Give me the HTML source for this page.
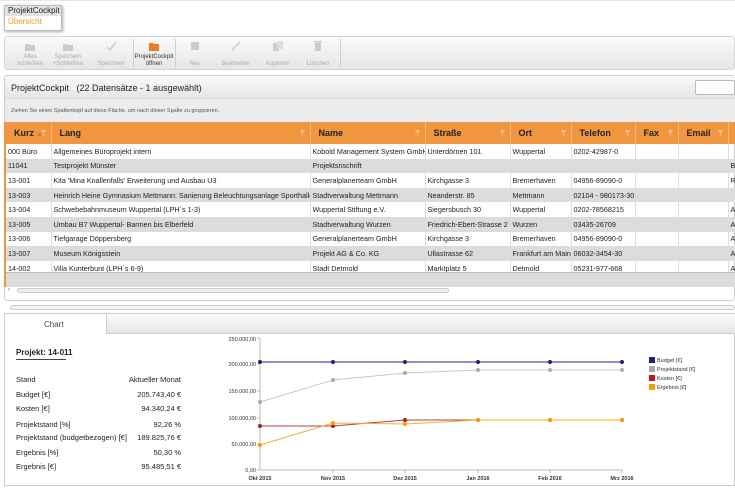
<!DOCTYPE html>
<html><head><meta charset="utf-8"><style>
*{box-sizing:border-box;margin:0;padding:0}
body{width:735px;height:491px;background:#fff;font-family:"Liberation Sans",sans-serif;font-size:8px;color:#222;position:relative;overflow:hidden}
.a{position:absolute}
.grad{background:linear-gradient(#fafafa,#e6e6e6)}
.btn{position:absolute;top:40px;width:40px;text-align:center;color:#aaa;font-size:6px;line-height:7px}
.btn svg{display:block;margin:0 auto 2px}
.sep{position:absolute;top:39px;width:1px;height:28px;background:#d0d0d0}
.wrap{position:absolute;left:6px;top:122px;width:729px;height:150px;overflow:hidden}
table{border-collapse:collapse;table-layout:fixed;width:742px}
td,th{white-space:nowrap;overflow:hidden;font-size:7.2px;padding:0 2px;border-right:1px solid #ddd}
th{background:#f0963f;height:22px;text-align:left;font-weight:bold;font-size:9px;color:#222;border-right:1px solid #f7b77a;padding-left:8px;position:relative}
th i{position:absolute;right:4px;top:8px;width:6px;height:6px;background:#f6c08e;clip-path:polygon(0 0,100% 0,60% 50%,60% 100%,40% 100%,40% 50%)}
td{height:14.6px}
tr.g td{background:#dcdcdc}
.lbl{position:absolute;left:16px;font-size:7.5px}
.val{position:absolute;right:554px;font-size:7.5px}
</style></head><body>
<div class="a" style="left:4px;top:5px;width:58px;height:26px;border:1px solid #bbb;box-shadow:1px 1px 3px #aaa;background:#fff">
<div style="background:#e2e2e2;height:10px;font-size:8px;padding-left:3px;line-height:10px">ProjektCockpit</div>
<div style="color:#f0a020;font-size:8px;padding-left:3px;line-height:12px">Übersicht</div></div>
<div class="a" style="left:0;top:0;width:735px;height:1px;background:#e6e6e6"></div>
<div class="a grad" style="left:4px;top:36px;width:731px;height:34px;border:1px solid #d4d4d4;border-radius:3px"></div>
<div class="btn" style="left:10px"><svg width="12" height="12"><path d="M1 4h4l1 1h5v6H1z" fill="#ccc"/></svg>Alles<br>schließen</div>
<div class="btn" style="left:48px"><svg width="12" height="12"><path d="M1 4h4l1 1h5v6H1z" fill="#ccc"/></svg>Speichern<br>+Schließen</div>
<div class="btn" style="left:91px"><svg width="12" height="12"><path d="M2 7l3 3 6-8" stroke="#ccc" fill="none" stroke-width="1.5"/></svg><br>Speichern</div>
<div class="sep" style="left:133px"></div>
<div class="btn" style="left:133px;color:#333;width:42px"><svg width="12" height="12"><path d="M1 3h4l1 1h5v7H1z" fill="#f07a20"/></svg>ProjektCockpit<br>öffnen</div>
<div class="sep" style="left:175px"></div>
<div class="btn" style="left:175px"><svg width="12" height="12"><rect x="2" y="2" width="8" height="8" fill="#ccc"/></svg><br>Neu</div>
<div class="btn" style="left:216px"><svg width="12" height="12"><path d="M2 10l8-8" stroke="#ccc" stroke-width="1.5"/></svg><br>Bearbeiten</div>
<div class="btn" style="left:258px"><svg width="12" height="12"><rect x="1" y="3" width="6" height="8" fill="#ccc"/><rect x="5" y="1" width="6" height="8" fill="#ddd"/></svg><br>Kopieren</div>
<div class="btn" style="left:298px"><svg width="12" height="12"><rect x="3" y="3" width="6" height="8" fill="#ccc"/><rect x="2" y="1" width="8" height="1.5" fill="#ccc"/></svg><br>Löschen</div>
<div class="sep" style="left:340px"></div>
<div class="a" style="left:4px;top:75px;width:731px;height:226px;border:1px solid #ccc;border-radius:3px;background:#fff"></div>
<div class="a grad" style="left:5px;top:76px;width:730px;height:23px;border-bottom:1px solid #ddd"></div>
<div class="a" style="left:11px;top:83px;font-size:9px">ProjektCockpit &nbsp; (22 Datensätze - 1 ausgewählt)</div>
<div class="a" style="left:695px;top:80px;width:40px;height:15px;border:1px solid #bbb;border-radius:2px;background:#fff"></div>
<div class="a" style="left:5px;top:99px;width:730px;height:23px;background:#ececec"></div>
<div class="a" style="left:11px;top:108px;font-size:5.5px;color:#555">Ziehen Sie einen Spaltenkopf auf diese Fläche, um nach dieser Spalte zu gruppieren.</div>
<div class="a" style="left:4px;top:122px;width:2px;height:165px;background:#f0963f"></div>
<div class="wrap"><table>
<colgroup><col style="width:45px"><col style="width:259px"><col style="width:115px"><col style="width:85px"><col style="width:61px"><col style="width:64px"><col style="width:43px"><col style="width:50px"><col style="width:20px"></colgroup>
<tr><th>Kurz <span style="color:#c77a30;font-size:6px">▲</span><i></i></th><th>Lang<i></i></th><th>Name<i></i></th><th>Straße<i></i></th><th>Ort<i></i></th><th>Telefon<i></i></th><th>Fax<i></i></th><th>Email<i></i></th><th></th></tr>
<tr><td>000 Büro</td><td>Allgemeines Büroprojekt intern</td><td>Kobold Management System GmbH</td><td>Unterdörnen 101</td><td>Wuppertal</td><td>0202-42987-0</td><td></td><td></td><td></td></tr>
<tr class="g"><td>11041</td><td>Testprojekt Münster</td><td>Projektsnschrift</td><td></td><td></td><td></td><td></td><td></td><td>B</td></tr>
<tr><td>13-001</td><td>Kita 'Mina Knallenfalls' Erweiterung und Ausbau U3</td><td>Generalplanerteam GmbH</td><td>Kirchgasse 3</td><td>Bremerhaven</td><td>04956-89090-0</td><td></td><td></td><td>R</td></tr>
<tr class="g"><td>13-003</td><td>Heinrich Heine Gymnasium Mettmann: Sanierung Beleuchtungsanlage Sporthalle</td><td>Stadtverwaltung Mettmann</td><td>Neanderstr. 85</td><td>Mettmann</td><td>02104 - 980173-30</td><td></td><td></td><td></td></tr>
<tr><td>13-004</td><td>Schwebebahnmuseum Wuppertal (LPH´s 1-3)</td><td>Wuppertal Stiftung e.V.</td><td>Siegersbusch 30</td><td>Wuppertal</td><td>0202-78568215</td><td></td><td></td><td>A</td></tr>
<tr class="g"><td>13-005</td><td>Umbau B7 Wuppertal- Barmen bis Elberfeld</td><td>Stadtverwaltung Wurzen</td><td>Friedrich-Ebert-Strasse 2</td><td>Wurzen</td><td>03435-26709</td><td></td><td></td><td>A</td></tr>
<tr><td>13-006</td><td>Tiefgarage Döppersberg</td><td>Generalplanerteam GmbH</td><td>Kirchgasse 3</td><td>Bremerhaven</td><td>04956-89090-0</td><td></td><td></td><td>A</td></tr>
<tr class="g"><td>13-007</td><td>Museum Königsstein</td><td>Projekt AG &amp; Co. KG</td><td>Ullastrasse 62</td><td>Frankfurt am Main</td><td>06032-3454-30</td><td></td><td></td><td>A</td></tr>
<tr><td>14-002</td><td>Villa Kunterbunt (LPH´s 6-9)</td><td>Stadt Detmold</td><td>Marktplatz 5</td><td>Detmold</td><td>05231-977-668</td><td></td><td></td><td>A</td></tr>
</table></div>
<div class="a" style="left:6px;top:272px;width:729px;height:15px;background:#dcdcdc;border-top:1px solid #bbb"></div>
<div class="a" style="left:17px;top:288px;width:432px;height:5px;border:1px solid #ccc;border-radius:3px;background:#eee"></div>
<div class="a" style="left:8px;top:287px;font-size:6px;color:#666">‹</div>
<div class="a" style="left:10px;top:305px;width:725px;height:5px;border:1px solid #ccc;border-radius:3px;background:#f2f2f2"></div>
<div class="a" style="left:4px;top:313px;width:731px;height:173px;border:1px solid #ccc;background:#fff"></div>
<div class="a grad" style="left:106px;top:314px;width:629px;height:20px;border-bottom:1px solid #ccc"></div>
<div class="a" style="left:106px;top:314px;width:1px;height:20px;background:#ccc"></div>
<div class="a" style="left:44px;top:320px;font-size:8px;color:#444">Chart</div>
<div class="a" style="left:16px;top:348px;font-size:8px;font-weight:bold">Projekt: 14-011</div>
<div class="a" style="left:16px;top:359px;width:50px;height:1px;background:#444"></div>
<div class="lbl" style="top:375px">Stand</div><div class="val" style="top:375px">Aktueller Monat</div>
<div class="lbl" style="top:390px">Budget [€]</div><div class="val" style="top:390px">205.743,40 €</div>
<div class="lbl" style="top:404px">Kosten [€]</div><div class="val" style="top:404px">94.340,24 €</div>
<div class="lbl" style="top:420px">Projektstand [%]</div><div class="val" style="top:420px">92,26 %</div>
<div class="lbl" style="top:433px">Projektstand (budgetbezogen) [€]</div><div class="val" style="top:433px">189.825,76 €</div>
<div class="lbl" style="top:448px">Ergebnis [%]</div><div class="val" style="top:448px">50,30 %</div>
<div class="lbl" style="top:462px">Ergebnis [€]</div><div class="val" style="top:462px">95.485,51 €</div>
<svg class="a" style="left:0;top:0" width="735" height="491" font-family="Liberation Sans" font-size="5.5" fill="#333">
<g text-anchor="end"><text x="256" y="341">250.000,00</text><text x="256" y="366">200.000,00</text><text x="256" y="393">150.000,00</text><text x="256" y="420">100.000,00</text><text x="256" y="446">50.000,00</text><text x="256" y="472">0,00</text></g>
<path d="M260 338V470H622" stroke="#bbb" fill="none"/>
<g stroke="#bbb"><path d="M257 338h3M257 364h3M257 391h3M257 418h3M257 444h3M257 470h3M333 470v3M405 470v3M478 470v3M550 470v3M622 470v3"/></g>
<g text-anchor="middle" font-weight="bold"><text x="260" y="480">Okt 2015</text><text x="333" y="480">Nov 2015</text><text x="405" y="480">Dez 2015</text><text x="478" y="480">Jan 2016</text><text x="550" y="480">Feb 2016</text><text x="622" y="480">Mrz 2016</text></g>
<polyline points="260,362 333,362 405,362 478,362 550,362 622,362" stroke="#7070a0" stroke-width="1.5" fill="none"/>
<polyline points="260,402 333,380 405,373 478,370 550,370 622,370" stroke="#c8c8c8" stroke-width="1" fill="none"/>
<polyline points="260,426 333,426 405,420 478,420 550,420 622,420" stroke="#b04040" stroke-width="1" fill="none"/>
<polyline points="260,445 333,423 405,424 478,420 550,420 622,420" stroke="#f0b030" stroke-width="1" fill="none"/>
<g fill="#1a237e"><circle cx="260" cy="362" r="2"/><circle cx="333" cy="362" r="2"/><circle cx="405" cy="362" r="2"/><circle cx="478" cy="362" r="2"/><circle cx="550" cy="362" r="2"/><circle cx="622" cy="362" r="2"/></g>
<g fill="#aaa"><circle cx="260" cy="402" r="2"/><circle cx="333" cy="380" r="2"/><circle cx="405" cy="373" r="2"/><circle cx="478" cy="370" r="2"/><circle cx="550" cy="370" r="2"/><circle cx="622" cy="370" r="2"/></g>
<g fill="#b71c1c"><circle cx="260" cy="426" r="2"/><circle cx="333" cy="426" r="2"/><circle cx="405" cy="420" r="2"/><circle cx="478" cy="420" r="2"/><circle cx="550" cy="420" r="2"/><circle cx="622" cy="420" r="2"/></g>
<g fill="#f5a000"><circle cx="260" cy="445" r="2"/><circle cx="333" cy="423" r="2"/><circle cx="405" cy="424" r="2"/><circle cx="478" cy="420" r="2"/><circle cx="550" cy="420" r="2"/><circle cx="622" cy="420" r="2"/></g>
<rect x="649" y="357" width="6" height="6" fill="#1a237e"/><text x="657" y="362">Budget [€]</text>
<rect x="649" y="366" width="6" height="6" fill="#aaa"/><text x="657" y="371">Projektstand [€]</text>
<rect x="649" y="375" width="6" height="6" fill="#b71c1c"/><text x="657" y="380">Kosten [€]</text>
<rect x="649" y="384" width="6" height="6" fill="#f5a000"/><text x="657" y="389">Ergebnis [€]</text>
</svg>
</body></html>
